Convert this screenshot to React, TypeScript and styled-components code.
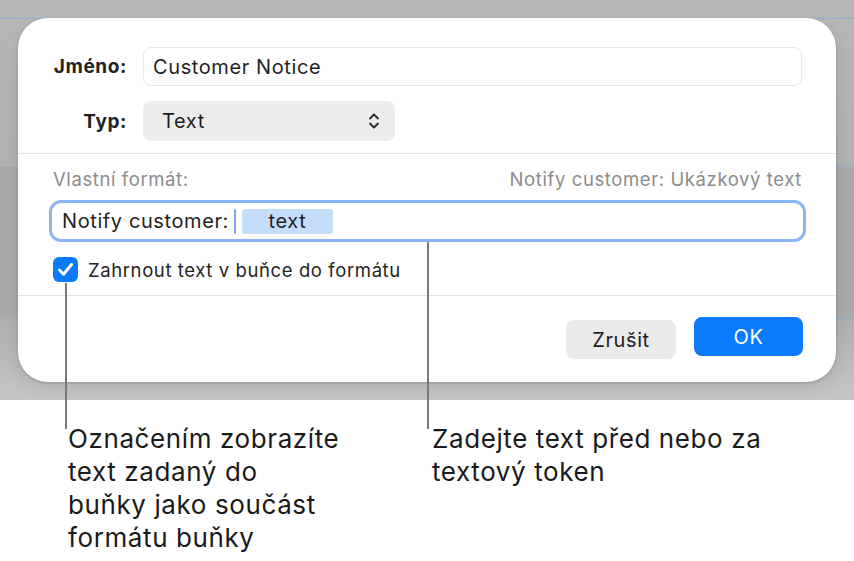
import React from "react";
import styled, { createGlobalStyle } from "styled-components";

const Global = createGlobalStyle`
  html, body { margin: 0; padding: 0; background: #ffffff; }
  body { font-family: Inter, "Noto Sans", "Liberation Sans", sans-serif; color: #1f1f1f; }
  * { box-sizing: border-box; }
`;

const Page = styled.div`
  position: relative;
  width: 854px;
  height: 561px;
  overflow: hidden;
  background: #ffffff;
`;

const Backdrop = styled.div`
  height: 400px;
  padding: 18px 18px 0 18px;
  background:
    linear-gradient(#8fb0d8, #8fb0d8) 0 18px / 100% 1px no-repeat,
    linear-gradient(#8aa9d4, #8aa9d4) 836px 165px / 18px 1px no-repeat,
    linear-gradient(#8aa9d4, #8aa9d4) 836px 318px / 18px 1px no-repeat,
    linear-gradient(#a9a9a9, #a9a9a9) 0 167px / 100% 150px no-repeat,
    linear-gradient(to bottom, #b7b7b7 0px, #b1b1b1 160px, #aeaeae 317px, #b9b9b9 360px, #c6c6c6 400px);
`;

const Dialog = styled.div`
  width: 818px;
  background: #ffffff;
  border-radius: 30px;
  box-shadow: 0 1px 3px rgba(0, 0, 0, 0.18), 0 6px 16px rgba(0, 0, 0, 0.08);
  display: flex;
  flex-direction: column;
`;

const NameSection = styled.div`
  display: grid;
  grid-template-columns: 109px 1fr;
  column-gap: 16px;
  row-gap: 15px;
  align-items: center;
  padding: 29px 34px 12px 0;
`;

const Label = styled.div`
  text-align: right;
  font-weight: 700;
  font-size: 19px;
  letter-spacing: 0.6px;
  color: #222222;
`;

const TextField = styled.div`
  height: 39px;
  border: 1px solid #e8e8e8;
  border-radius: 8px;
  padding: 0 9px;
  display: flex;
  align-items: center;
  font-size: 20px;
  letter-spacing: 0.6px;
  color: #1f1f1f;
`;

const PopUp = styled.div`
  width: 252px;
  height: 40px;
  border-radius: 8px;
  background: #ececec;
  padding: 0 15px 0 19px;
  display: flex;
  align-items: center;
  justify-content: space-between;
  font-size: 20px;
  letter-spacing: 0.6px;
  color: #1f1f1f;
`;

const Divider = styled.div`
  height: 1px;
  background: #e4e4e4;
`;

const FormatSection = styled.div`
  display: flex;
  flex-direction: column;
  padding: 13px 30px 13px 31px;
`;

const FormatHeader = styled.div`
  display: flex;
  justify-content: space-between;
  align-items: center;
  height: 24px;
  padding: 0 4px;
  margin-bottom: 9px;
`;

const Muted = styled.span`
  font-size: 18.5px;
  letter-spacing: 0.6px;
  color: #8c8c8c;
`;

const TokenField = styled.div`
  height: 42px;
  border: 3.5px solid #8db4f6;
  border-radius: 12px;
  padding: 0 10px;
  display: flex;
  align-items: center;
  font-size: 20px;
  letter-spacing: 0.6px;
  color: #1f1f1f;
`;

const Caret = styled.span`
  width: 2px;
  height: 25px;
  margin: 0 6px 0 5px;
  background: #7aa6ee;
  border-radius: 1px;
`;

const Token = styled.span`
  width: 91px;
  height: 25px;
  border-radius: 3px;
  background: #c5ddfb;
  display: flex;
  align-items: center;
  justify-content: center;
  color: #1f1f1f;
`;

const CheckRow = styled.div`
  display: flex;
  align-items: center;
  gap: 10px;
  margin-top: 15px;
  padding: 0 4px;
`;

const CheckBox = styled.span`
  width: 25px;
  height: 25px;
  border-radius: 6px;
  background: #0a7aff;
  display: flex;
  align-items: center;
  justify-content: center;
`;

const CheckLabel = styled.span`
  font-size: 18.5px;
  letter-spacing: 0.6px;
  color: #242424;
`;

const Footer = styled.div`
  display: flex;
  justify-content: flex-end;
  align-items: flex-start;
  gap: 18px;
  padding: 21px 33px 23px 0;
`;

const Button = styled.button<{ $primary?: boolean; $drop?: number }>`
  width: ${(p) => (p.$primary ? 109 : 110)}px;
  height: 39px;
  margin-top: ${(p) => p.$drop ?? 0}px;
  border: none;
  border-radius: 8px;
  font-family: inherit;
  font-size: 20px;
  letter-spacing: 0.6px;
  background: ${(p) => (p.$primary ? "#0a7bff" : "#ebebeb")};
  color: ${(p) => (p.$primary ? "#ffffff" : "#222222")};
  display: flex;
  align-items: center;
  justify-content: center;
`;

const Callouts = styled.div`
  display: grid;
  grid-template-columns: 364px 1fr;
  padding: 22px 0 0 68px;
`;

const Callout = styled.p`
  margin: 0;
  font-size: 26px;
  letter-spacing: 0.6px;
  line-height: 33px;
  color: #1a1a1a;
`;

const Leader = styled.div<{ $left: number; $top: number; $height: number }>`
  position: absolute;
  left: ${(p) => p.$left}px;
  top: ${(p) => p.$top}px;
  height: ${(p) => p.$height}px;
  width: 1.5px;
  background: #7a7a7a;
`;

const UpDown = () => (
  <svg width="12" height="18" viewBox="0 0 12 18" fill="none">
    <path d="M2 6.5 L6 2.5 L10 6.5" stroke="#2a2a2a" strokeWidth="1.8" strokeLinecap="round" strokeLinejoin="round" />
    <path d="M2 11.5 L6 15.5 L10 11.5" stroke="#2a2a2a" strokeWidth="1.8" strokeLinecap="round" strokeLinejoin="round" />
  </svg>
);

const Check = () => (
  <svg width="17" height="15" viewBox="0 0 17 15" fill="none">
    <path d="M2.5 8 L6.5 12.2 L14.5 2.5" stroke="#ffffff" strokeWidth="3" strokeLinecap="round" strokeLinejoin="round" />
  </svg>
);

export default function App() {
  return (
    <>
      <Global />
      <Page>
        <Backdrop>
          <Dialog>
            <NameSection>
              <Label>Jméno:</Label>
              <TextField>Customer Notice</TextField>
              <Label>Typ:</Label>
              <PopUp>
                Text
                <UpDown />
              </PopUp>
            </NameSection>
            <Divider />
            <FormatSection>
              <FormatHeader>
                <Muted>Vlastní formát:</Muted>
                <Muted>Notify customer: Ukázkový text</Muted>
              </FormatHeader>
              <TokenField>
                Notify customer:
                <Caret />
                <Token>text</Token>
              </TokenField>
              <CheckRow>
                <CheckBox>
                  <Check />
                </CheckBox>
                <CheckLabel>Zahrnout text v buňce do formátu</CheckLabel>
              </CheckRow>
            </FormatSection>
            <Divider />
            <Footer>
              <Button $drop={3}>Zrušit</Button>
              <Button $primary>OK</Button>
            </Footer>
          </Dialog>
        </Backdrop>
        <Callouts>
          <Callout>
            Označením zobrazíte
            <br />
            text zadaný do
            <br />
            buňky jako součást
            <br />
            formátu buňky
          </Callout>
          <Callout>
            Zadejte text před nebo za
            <br />
            textový token
          </Callout>
        </Callouts>
        <Leader $left={65} $top={283} $height={146} />
        <Leader $left={427} $top={242} $height={187} />
      </Page>
    </>
  );
}
